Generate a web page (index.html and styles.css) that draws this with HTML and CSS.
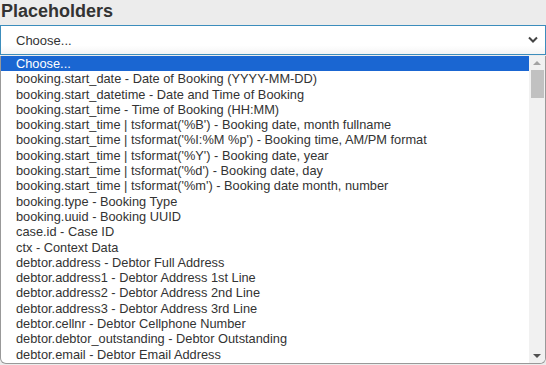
FILE: index.html
```html
<!DOCTYPE html>
<html lang="en">
<head>
  <meta charset="UTF-8">
  <title>Placeholders</title>
  <link rel="stylesheet" href="styles.css">
</head>
<body>
  <h3 class="title">Placeholders</h3>

  <div class="select">
    <span>Choose...</span>
    <svg class="chevron" width="10" height="8" viewBox="0 0 10 8">
      <path d="M1 1.5 L5 5.5 L9 1.5" fill="none" stroke="#444" stroke-width="2"/>
    </svg>
  </div>

  <div class="dropdown">
    <ul class="options">
      <li class="active">Choose...</li>
      <li>booking.start_date - Date of Booking (YYYY-MM-DD)</li>
      <li>booking.start_datetime - Date and Time of Booking</li>
      <li>booking.start_time - Time of Booking (HH:MM)</li>
      <li>booking.start_time | tsformat('%B') - Booking date, month fullname</li>
      <li>booking.start_time | tsformat('%I:%M %p') - Booking time, AM/PM format</li>
      <li>booking.start_time | tsformat('%Y') - Booking date, year</li>
      <li>booking.start_time | tsformat('%d') - Booking date, day</li>
      <li>booking.start_time | tsformat('%m') - Booking date month, number</li>
      <li>booking.type - Booking Type</li>
      <li>booking.uuid - Booking UUID</li>
      <li>case.id - Case ID</li>
      <li>ctx - Context Data</li>
      <li>debtor.address - Debtor Full Address</li>
      <li>debtor.address1 - Debtor Address 1st Line</li>
      <li>debtor.address2 - Debtor Address 2nd Line</li>
      <li>debtor.address3 - Debtor Address 3rd Line</li>
      <li>debtor.cellnr - Debtor Cellphone Number</li>
      <li>debtor.debtor_outstanding - Debtor Outstanding</li>
      <li>debtor.email - Debtor Email Address</li>
    </ul>
    <div class="scrollbar">
      <span class="arrow up"></span>
      <span class="thumb"></span>
      <span class="track"></span>
      <span class="arrow down"></span>
    </div>
  </div>
</body>
</html>
```
FILE: styles.css
```css
body {
  margin: 0;
  background: #ececec;
  font-family: "Liberation Sans", Arial, sans-serif;
  color: #333;
  height: 365px;
  overflow: hidden;
}

.title {
  margin: 0;
  padding: 2px 0 0 1px;
  height: 23px;
  font-size: 18px;
  font-weight: bold;
  line-height: 19px;
  color: #333;
}

.select {
  display: flex;
  align-items: center;
  justify-content: space-between;
  height: 28px;
  padding: 0 7px 0 15px;
  background: linear-gradient(#fff 70%, #f4f4f4);
  border: 1px solid #3c8dbc;
  font-size: 13px;
  color: #333;
}

.dropdown {
  display: flex;
  margin-top: 1px;
  height: 307px;
  background: #fff;
  border: 1px solid #999;
  border-top: 0;
  border-radius: 0 0 6px 6px;
  overflow: hidden;
}

.options {
  flex: 1;
  margin: 0;
  padding: 0;
  list-style: none;
  font-size: 12.8px;
  line-height: 15.3px;
}

.options li {
  padding-left: 15px;
  white-space: nowrap;
}

.options li.active {
  background: #1a66d2;
  color: #fff;
}

.scrollbar {
  display: flex;
  flex-direction: column;
  align-items: center;
  width: 16px;
  background: #f1f1f1;
}

.arrow {
  width: 0;
  height: 0;
  margin: 5px 0;
  border-left: 4px solid transparent;
  border-right: 4px solid transparent;
}

.arrow.up {
  border-bottom: 4px solid #a3a3a3;
}

.arrow.down {
  border-top: 4px solid #505050;
}

.thumb {
  width: 13px;
  height: 28px;
  background: #c1c1c1;
}

.track {
  flex: 1;
}
```
